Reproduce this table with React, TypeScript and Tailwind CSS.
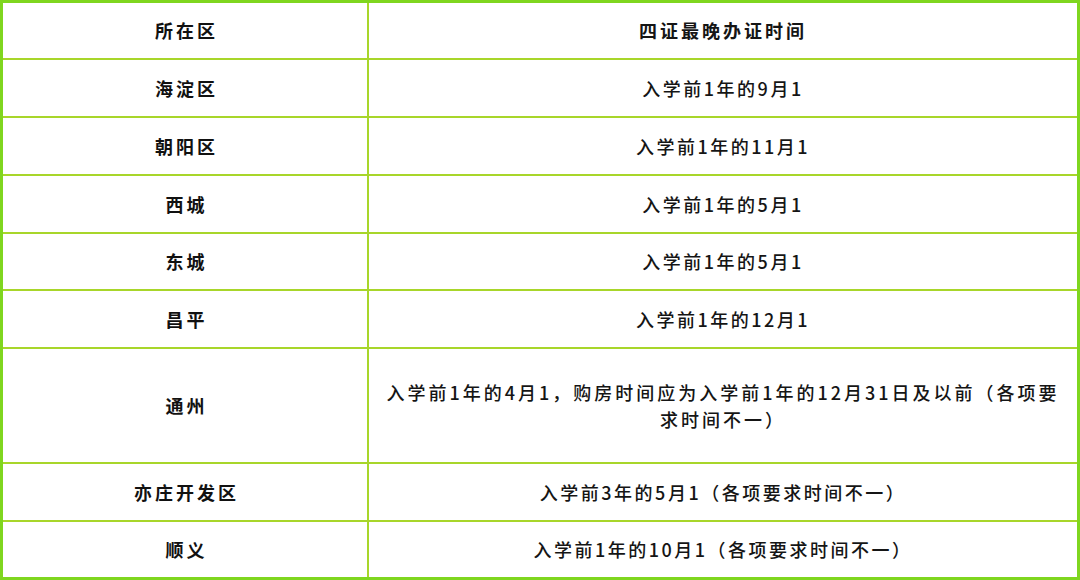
const rows: { area: string; time: React.ReactNode; h: string; wide?: boolean }[] = [
  { area: "海淀区", time: "入学前1年的9月1", h: "h-[58px]" },
  { area: "朝阳区", time: "入学前1年的11月1", h: "h-[58px]" },
  { area: "西城", time: "入学前1年的5月1", h: "h-[58px]" },
  { area: "东城", time: "入学前1年的5月1", h: "h-[57px]" },
  { area: "昌平", time: "入学前1年的12月1", h: "h-[58px]" },
  {
    area: "通州",
    time: (
      <>
        入学前1年的4月1，购房时间应为入学前1年的12月31日及以前（各项要
        <br />
        求时间不一）
      </>
    ),
    h: "h-[115px]",
    wide: true,
  },
  { area: "亦庄开发区", time: "入学前3年的5月1（各项要求时间不一）", h: "h-[58px]" },
  { area: "顺义", time: "入学前1年的10月1（各项要求时间不一）", h: "h-[55px]" },
];

const font = { fontFamily: '"Noto Sans CJK SC", "Noto Sans", sans-serif' };

function Row({
  area,
  time,
  h,
  last,
  header,
  wide,
}: {
  area: string;
  time: React.ReactNode;
  h: string;
  last?: boolean;
  header?: boolean;
  wide?: boolean;
}) {
  return (
    <div
      className={`grid grid-cols-[366px_1fr] ${h} ${
        last ? "" : "border-b-2 border-[#a8d62a]"
      }`}
    >
      <div className="flex items-center justify-center border-r-2 border-[#a8d62a] pl-[3px] text-[18px] font-bold tracking-[3px] text-[#111]">
        {area}
      </div>
      <div
        className={`flex items-center justify-center px-2 text-center text-[18px] leading-[27px] text-[#151515] ${
          header ? "font-bold tracking-[3px]" : "font-medium"
        } ${wide ? "tracking-[3px]" : header ? "" : "tracking-[2.5px]"}`}
      >
        <span>{time}</span>
      </div>
    </div>
  );
}

export default function App() {
  return (
    <div className="h-[580px] w-[1080px] bg-white" style={font}>
      <div className="flex h-full w-full flex-col border-[3px] border-[#7fd61f]">
        <Row area="所在区" time="四证最晚办证时间" h="h-[57px]" header />
        {rows.map((r, i) => (
          <Row
            key={r.area}
            area={r.area}
            time={r.time}
            h={r.h}
            wide={r.wide}
            last={i === rows.length - 1}
          />
        ))}
      </div>
    </div>
  );
}
